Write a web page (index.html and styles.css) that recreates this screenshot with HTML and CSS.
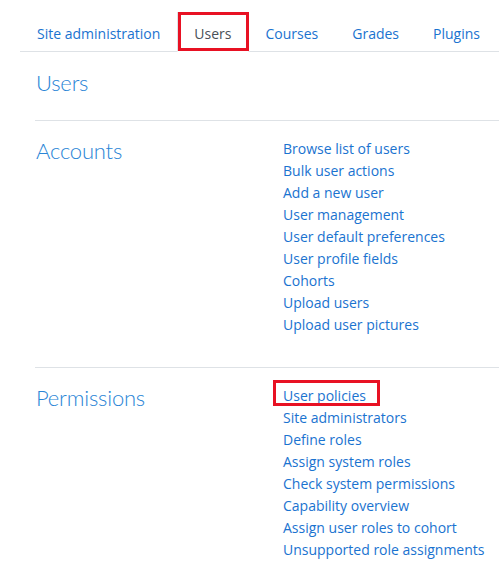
FILE: index.html
```html
<!DOCTYPE html>
<html lang="en">
<head>
<meta charset="utf-8">
<title>Users - Site administration</title>
<link rel="stylesheet" href="styles.css">
</head>
<body>
<nav class="tabs">
  <ul class="tab-list">
    <li class="tab"><a href="#">Site administration</a></li>
    <li class="tab active marked"><a href="#">Users</a></li>
    <li class="tab"><a href="#">Courses</a></li>
    <li class="tab"><a href="#">Grades</a></li>
    <li class="tab"><a href="#">Plugins</a></li>
  </ul>
</nav>
<main class="content">
  <h2 class="page-title">Users</h2>
  <section class="section">
    <h3 class="section-title">Accounts</h3>
    <ul class="links">
      <li><a href="#">Browse list of users</a></li>
      <li><a href="#">Bulk user actions</a></li>
      <li><a href="#">Add a new user</a></li>
      <li><a href="#">User management</a></li>
      <li><a href="#">User default preferences</a></li>
      <li><a href="#">User profile fields</a></li>
      <li><a href="#">Cohorts</a></li>
      <li><a href="#">Upload users</a></li>
      <li><a href="#">Upload user pictures</a></li>
    </ul>
  </section>
  <section class="section">
    <h3 class="section-title">Permissions</h3>
    <ul class="links">
      <li><a href="#" class="marked-link">User policies</a></li>
      <li><a href="#">Site administrators</a></li>
      <li><a href="#">Define roles</a></li>
      <li><a href="#">Assign system roles</a></li>
      <li><a href="#">Check system permissions</a></li>
      <li><a href="#">Capability overview</a></li>
      <li><a href="#">Assign user roles to cohort</a></li>
      <li><a href="#">Unsupported role assignments</a></li>
    </ul>
  </section>
</main>
</body>
</html>
```
FILE: styles.css
```css
html, body {
  margin: 0;
  padding: 0;
  background: #ffffff;
}
body {
  font-family: "Open Sans", "Noto Sans", sans-serif;
  font-size: 14px;
  color: #1d2125;
  overflow: hidden;
}
a {
  color: #1a73d0;
  text-decoration: none;
}
.tabs {
  padding: 12px 0 0 20px;
}
.tab-list {
  list-style: none;
  margin: 0;
  padding: 0;
  display: flex;
  border-bottom: 1px solid #dee2e6;
}
.tab {
  margin-bottom: -1px;
}
.tab a {
  display: block;
  padding: 10px 16px 6px;
  line-height: 22px;
  border: 1px solid transparent;
  font-size: 14px;
}
.tab.active a {
  color: #495057;
  border-color: #dee2e6 #dee2e6 #fff;
  background: #fff;
}
.marked {
  position: relative;
}
.marked::after {
  content: "";
  position: absolute;
  left: 1px;
  top: 0;
  right: 0;
  bottom: 1px;
  border: 3px solid #e81123;
  pointer-events: none;
}
.content {
  padding-left: 35px;
}
.page-title {
  margin: 0;
  padding: 14px 0 20px 1px;
  font-family: "Lato", "Open Sans", sans-serif;
  font-weight: 300;
  font-size: 22px;
  letter-spacing: -0.2px;
  line-height: 34px;
  color: #2a85d6;
}
.section {
  border-top: 1px solid #dee2e6;
  padding: 17px 0 31px;
  display: grid;
  grid-template-columns: 248px 1fr;
}
.section-title {
  margin: 0;
  padding: 0 0 0 1px;
  font-family: "Lato", "Open Sans", sans-serif;
  font-weight: 300;
  font-size: 22px;
  letter-spacing: -0.2px;
  line-height: 26px;
  color: #2a85d6;
}
.links {
  list-style: none;
  margin: 0;
  padding: 0;
}
.links li {
  line-height: 22px;
}
.marked-link {
  position: relative;
}
.marked-link::after {
  content: "";
  position: absolute;
  left: -10px;
  right: -14px;
  top: -6px;
  bottom: -1px;
  border: 3px solid #e81123;
  pointer-events: none;
}
```
